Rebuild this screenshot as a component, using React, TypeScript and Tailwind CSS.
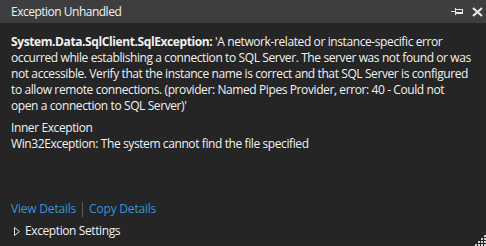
const lines = [
  "occurred while establishing a connection to SQL Server. The server was not found or was",
  "not accessible. Verify that the instance name is correct and that SQL Server is configured",
  "to allow remote connections. (provider: Named Pipes Provider, error: 40 - Could not",
  "open a connection to SQL Server)'",
];

function PinIcon() {
  return (
    <svg width="13" height="9" viewBox="0 0 13 9" fill="none" stroke="#e8e8e8" strokeWidth="1">
      <path d="M0 4.5h4" />
      <path d="M4.5 1v7" />
      <rect x="4.5" y="2.5" width="7" height="4" />
      <path d="M4.5 5.5h7" />
    </svg>
  );
}

function CloseIcon() {
  return (
    <svg width="11" height="10" viewBox="0 0 11 10" stroke="#e8e8e8" strokeWidth="2.2">
      <path d="M1 1l9 8M10 1l-9 8" />
    </svg>
  );
}

function Grip() {
  const dots = [
    [9, 0], [6, 3], [9, 3], [3, 6], [6, 6], [9, 6], [0, 9], [3, 9], [6, 9], [9, 9],
  ];
  return (
    <svg width="11" height="11" viewBox="0 0 11 11" className="absolute bottom-0 right-0">
      {dots.map(([x, y]) => (
        <rect key={`${x}-${y}`} x={x} y={y} width="2" height="2" fill="#d0d0d0" />
      ))}
    </svg>
  );
}

export default function App() {
  return (
    <div
      className="relative flex h-[246px] w-[486px] flex-col bg-[#252526] text-[12px] text-[#f1f1f1]"
      style={{ fontFamily: '"Open Sans", "Noto Sans", sans-serif' }}
    >
      <div className="flex h-[23px] items-center justify-between bg-[#3e3e40] pl-[11px] pr-[3px]">
        <span className="text-[12px] tracking-[-0.5px]">Exception Unhandled</span>
        <div className="flex items-center gap-[8px]">
          <PinIcon />
          <CloseIcon />
        </div>
      </div>

      <div className="flex flex-1 flex-col px-[11px] pt-[11px] leading-[16px] tracking-[-0.4px]">
        <p className="whitespace-nowrap">
          <span className="font-bold">System.Data.SqlClient.SqlException:</span> 'A network-related or
          instance-specific error
        </p>
        {lines.map((l) => (
          <p key={l} className="whitespace-nowrap">
            {l}
          </p>
        ))}
        <p className="mt-[6px]">Inner Exception</p>
        <p>Win32Exception: The system cannot find the file specified</p>

        <div className="mt-auto mb-[7px] flex flex-col gap-[6px]">
          <div className="flex items-center text-[#3794d6] tracking-[-0.2px]">
            <span>View Details</span>
            <span className="mx-[6px] h-[15px] w-px bg-[#5a5a5c]" />
            <span>Copy Details</span>
          </div>
          <div className="flex items-center gap-[5px] pl-[3px]">
            <svg width="6" height="9" viewBox="0 0 6 9" fill="none" stroke="#e0e0e0" strokeWidth="1">
              <path d="M0.5 0.5v8l5-4z" />
            </svg>
            <span>Exception Settings</span>
          </div>
        </div>
      </div>
      <Grip />
    </div>
  );
}
